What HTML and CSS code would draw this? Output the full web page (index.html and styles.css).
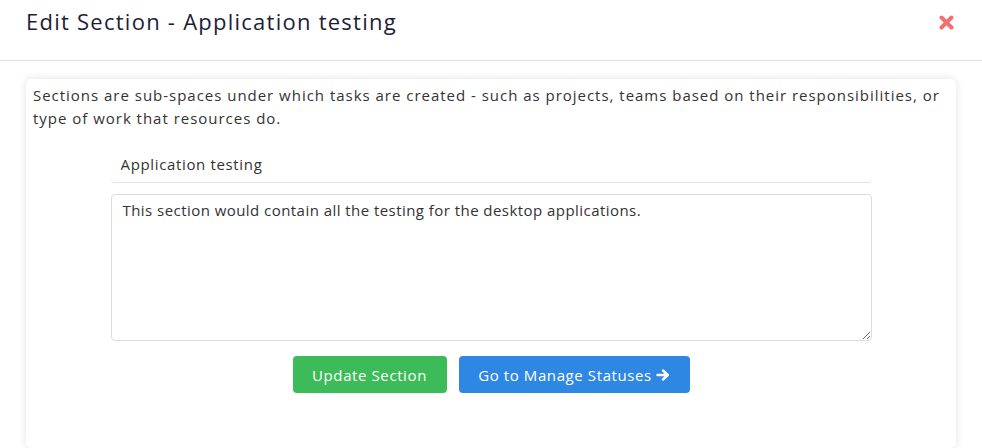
FILE: index.html
```html
<!DOCTYPE html>
<html>
<head>
<meta charset="utf-8">
<link rel="stylesheet" href="styles.css">
</head>
<body>
<div class="modal">
  <header class="modal-header">
    <h1 class="modal-title">Edit Section - Application testing</h1>
    <svg class="close" width="15" height="15" viewBox="0 0 15 15"><path d="M2.5 2.5 L12.5 12.5 M12.5 2.5 L2.5 12.5" stroke="#f27070" stroke-width="4" stroke-linecap="round"/></svg>
  </header>
  <div class="modal-body">
    <div class="card">
      <p class="intro">Sections are sub-spaces under which tasks are created - such as projects, teams based on their responsibilities, or type of work that resources do.</p>
      <div class="form">
        <input class="name-input" type="text" value="Application testing">
        <textarea class="desc">This section would contain all the testing for the desktop applications.</textarea>
        <div class="actions">
          <button class="btn btn-green">Update Section</button>
          <button class="btn btn-blue">Go to Manage Statuses <svg class="arrow" width="14" height="12" viewBox="0 0 14 12"><path d="M1.5 6 H11.5 M7 1.5 L11.8 6 L7 10.5" stroke="#fff" stroke-width="2.4" fill="none" stroke-linecap="round" stroke-linejoin="round"/></svg></button>
        </div>
      </div>
    </div>
  </div>
</div>
</body>
</html>
```
FILE: styles.css
```css
* { box-sizing: border-box; }
html, body { margin: 0; padding: 0; background: #fff; }
body {
  font-family: "Open Sans", "DejaVu Sans", sans-serif;
  color: #333;
  width: 982px;
  height: 448px;
  overflow: hidden;
}
.modal-header {
  height: 61px;
  border-bottom: 1px solid #e3e3e3;
  display: flex;
  align-items: flex-start;
  justify-content: space-between;
  padding: 6px 28px 0 26px;
}
.modal-title {
  margin: 0;
  font-size: 22px;
  font-weight: 400;
  color: #1d1d35;
  letter-spacing: 1.25px;
}
.close {
  margin-top: 9px;
}
.modal-body {
  padding: 18px 26px 0 26px;
}
.card {
  background: #fff;
  border-radius: 5px;
  box-shadow: 0 0 8px rgba(0,0,0,0.12);
  padding: 5px 7px 0 7px;
  height: 369px;
}
.intro {
  margin: 0;
  font-size: 15px;
  line-height: 23px;
  color: #333;
  letter-spacing: 0.98px;
}
.form {
  width: 761px;
  margin: 15px auto 0 auto;
  display: flex;
  flex-direction: column;
}
.name-input {
  border: none;
  border-bottom: 1px solid #e2e2e2;
  font-family: inherit;
  font-size: 15px;
  letter-spacing: 0.65px;
  color: #333;
  padding: 8px 10px 8px 10px;
  height: 38px;
  outline: none;
  border-radius: 0 0 4px 4px;
}
.desc {
  margin-top: 11px;
  height: 147px;
  border: 1px solid #dcdcdc;
  border-radius: 4px;
  font-family: inherit;
  font-size: 15px;
  letter-spacing: 0.45px;
  color: #333;
  padding: 5px 11px;
  resize: vertical;
  outline: none;
}
.actions {
  display: flex;
  justify-content: center;
  gap: 12px;
  margin-top: 15px;
}
.btn {
  border: none;
  border-radius: 4px;
  color: #fff;
  font-family: inherit;
  font-size: 15px;
  font-weight: 500;
  letter-spacing: 0.6px;
  height: 37px;
  padding: 0;
  display: flex;
  align-items: center;
  justify-content: center;
  gap: 3px;
}
.btn-green { background: #3dbb58; width: 154px; }
.btn-blue { background: #2f87e4; width: 231px; }
.arrow { margin-left: 1px; }
```
